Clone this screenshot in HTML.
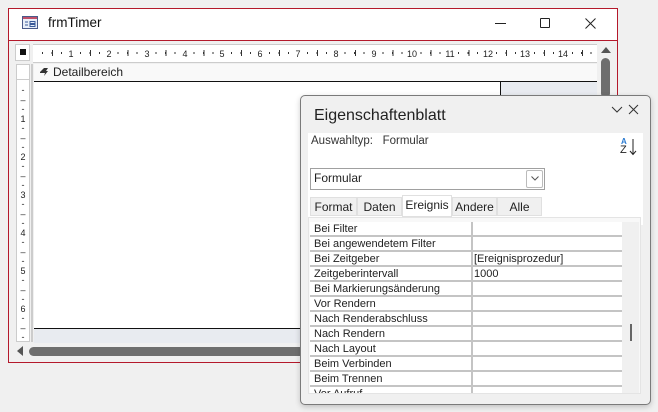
<!DOCTYPE html>
<html><head><meta charset="utf-8"><style>
*{margin:0;padding:0;box-sizing:border-box}
body{width:658px;height:412px;background:#f0f0f0;position:relative;overflow:hidden;font-family:"Segoe UI","Liberation Sans",sans-serif;font-size:11px;color:#222}
.a{position:absolute}
.row{position:absolute;left:310px;width:312px;height:15px;border-bottom:2px solid #c4c4c4}
.row span{position:absolute;left:4px;top:0;line-height:14px;font-size:11px}
.row i{position:absolute;left:164px;top:0;font-style:normal;line-height:14px;font-size:11px}
.row:before{content:"";position:absolute;left:161px;top:0;width:2px;height:15px;background:#c4c4c4}
.tab{position:absolute;top:197px;height:19px;background:#f0f0f0;border:1px solid #e0e0e0;font-size:12px;text-align:center;line-height:19px}
.n{position:absolute;top:4px;font-size:9px;line-height:10px;width:14px;margin-left:-7px;text-align:center;background:#fff}
</style></head><body>
<div class="a" style="left:8px;top:8px;width:610px;height:355px;border:1px solid #b4192b;background:#f0f0f0"></div>
<div class="a" style="left:9px;top:9px;width:608px;height:31px;background:#fff"></div>
<div class="a" style="left:9px;top:40px;width:608px;height:1px;background:#b4192b"></div>
<svg class="a" style="left:22px;top:16px" width="16" height="13"><rect x="0.5" y="0.5" width="15" height="12" fill="#e8eef8" stroke="#4a5a8a"/><rect x="1" y="1" width="14" height="2" fill="#c0506a"/><path d="M3 6h3M3 9h3M8 5.5h5v2h-5zM8 8.5h5v2h-5z" stroke="#3a5a9a" fill="none"/></svg>
<div class="a" style="left:48px;top:15px;font-size:13.5px;color:#111">frmTimer</div>
<div class="a" style="left:495px;top:23px;width:11px;height:1px;background:#222"></div>
<div class="a" style="left:540px;top:18px;width:10px;height:10px;border:1px solid #222;border-radius:1px"></div>
<svg class="a" style="left:585px;top:18px" width="11" height="11"><path d="M0.5 0.5L10.5 10.5M10.5 0.5L0.5 10.5" stroke="#222"/></svg>
<div class="a" style="left:15px;top:44px;width:15px;height:17px;background:#fff;border:1px solid #ccc"></div>
<div class="a" style="left:20px;top:49px;width:6px;height:6px;background:#111"></div>
<!-- horizontal ruler -->
<div class="a" style="left:33px;top:44px;width:564px;height:19px;background-color:#fff;border-top:1px solid #ccc;border-bottom:1px solid #ccc;overflow:hidden">
<div class="a" style="left:9px;top:7px;width:560px;height:2px;background:repeating-linear-gradient(90deg,#333 0 1px,transparent 1px 9.46px)"></div>
<div class="a" style="left:19px;top:5px;width:560px;height:6px;background:repeating-linear-gradient(90deg,#333 0 1px,transparent 1px 37.85px)"></div>
<div class="n" style="left:38px">1</div><div class="n" style="left:76px">2</div><div class="n" style="left:114px">3</div><div class="n" style="left:152px">4</div><div class="n" style="left:189px">5</div><div class="n" style="left:227px">6</div><div class="n" style="left:265px">7</div><div class="n" style="left:303px">8</div><div class="n" style="left:341px">9</div><div class="n" style="left:379px">10</div><div class="n" style="left:417px">11</div><div class="n" style="left:455px">12</div><div class="n" style="left:492px">13</div><div class="n" style="left:530px">14</div>
</div>
<div class="a" style="left:16px;top:64px;width:14px;height:278px;background:#fff;border:1px solid #ccc"></div>
<div class="a" style="left:16px;top:64px;width:14px;height:16px;border-bottom:1px solid #ccc"></div>
<div class="a" style="left:17px;top:86px;width:12px;font-size:9px;line-height:9.5px;text-align:center">-<br>–<br>-<br>1<br>-<br>–<br>-<br>2<br>-<br>–<br>-<br>3<br>-<br>–<br>-<br>4<br>-<br>–<br>-<br>5<br>-<br>–<br>-<br>6<br>-<br>–<br>-</div>
<div class="a" style="left:31px;top:64px;width:2px;height:278px;background:#ccc"></div>
<div class="a" style="left:34px;top:64px;width:563px;height:17px;background:#f9f9f9"></div>
<svg class="a" style="left:39px;top:68px" width="10" height="9"><path d="M1 4L5 0H9L7 3H9L5 8L6 5H1z" fill="#333"/></svg>
<div class="a" style="left:53px;top:65px;font-size:12px;color:#222">Detailbereich</div>
<div class="a" style="left:34px;top:81px;width:563px;height:1px;background:#111"></div>
<div class="a" style="left:34px;top:82px;width:466px;height:246px;background:#fff"></div>
<div class="a" style="left:500px;top:82px;width:1px;height:246px;background:#111"></div>
<div class="a" style="left:501px;top:82px;width:96px;height:261px;background:#e8ebf0"></div>
<div class="a" style="left:34px;top:328px;width:466px;height:1px;background:#111"></div>
<div class="a" style="left:34px;top:329px;width:466px;height:14px;background:#e8ebf0"></div>
<div class="a" style="left:12px;top:343px;width:590px;height:16px;background:#f0f0f0"></div>
<svg class="a" style="left:16px;top:346px" width="8" height="10"><path d="M7 0V10L1 5z" fill="#555"/></svg>
<div class="a" style="left:29px;top:347px;width:280px;height:9px;background:#6e6e6e;border-radius:5px"></div>
<svg class="a" style="left:601px;top:46px" width="10" height="8"><path d="M0 7H10L5 1z" fill="#555"/></svg>
<div class="a" style="left:601px;top:58px;width:9px;height:40px;background:#6e6e6e;border-radius:5px"></div>
<!-- property sheet -->
<div class="a" style="left:300px;top:95px;width:351px;height:310px;background:#f0f0f0;border:1px solid #7a7a7a;border-radius:5px;box-shadow:0 2px 6px rgba(0,0,0,.2)"></div>
<div class="a" style="left:314px;top:107px;font-size:16px;color:#222">Eigenschaftenblatt</div>
<svg class="a" style="left:611px;top:104px" width="30" height="12"><path d="M1 3L6 8L11 3M18 1L27 10M27 1L18 10" stroke="#333" fill="none"/></svg>
<div class="a" style="left:308px;top:133px;width:335px;height:92px;background:#fff"></div>
<div class="a" style="left:311px;top:135px;font-size:11.5px;color:#333">Auswahltyp:&nbsp;&nbsp; Formular</div>
<div class="a" style="left:621px;top:138px;font-size:8px;font-weight:bold;color:#2a7ad0;line-height:8px">A</div>
<div class="a" style="left:620px;top:145px;font-size:11px;color:#222;line-height:11px">Z</div>
<svg class="a" style="left:629px;top:139px" width="8" height="17"><path d="M4 0V15M1 12L4 15.5L7 12" stroke="#222" fill="none"/></svg>
<div class="a" style="left:310px;top:168px;width:235px;height:22px;border:1px solid #a0a0a0;background:#fff"></div>
<div class="a" style="left:314px;top:171px;font-size:12px;line-height:14px">Formular</div>
<div class="a" style="left:526px;top:170px;width:17px;height:18px;border:1px solid #bbb;border-radius:2px"></div>
<svg class="a" style="left:531px;top:176px" width="8" height="5"><path d="M0.5 0.5L4 4L7.5 0.5" stroke="#555" fill="none"/></svg>
<div class="tab" style="left:310px;width:47px">Format</div>
<div class="tab" style="left:357px;width:45px">Daten</div>
<div class="tab" style="left:452px;width:45px">Andere</div>
<div class="tab" style="left:497px;width:45px">Alle</div>
<div class="tab" style="left:402px;top:195px;width:50px;height:22px;background:#fff;line-height:18px">Ereignis</div>
<div class="a" style="left:308px;top:217px;width:333px;height:177px;background:#f8f8f8;border:1px solid #e4e4e4"></div>
<div class="a" style="left:310px;top:222px;width:312px;height:171px;background:#fff"></div>
<div class="a" style="left:622px;top:222px;width:17px;height:171px;background:#f0f0f0"></div>
<div class="a" style="left:630px;top:324px;width:2px;height:17px;background:#666"></div>
<div class="row" style="top:222px"><span>Bei Filter</span></div>
<div class="row" style="top:237px"><span>Bei angewendetem Filter</span></div>
<div class="row" style="top:252px"><span>Bei Zeitgeber</span><i>[Ereignisprozedur]</i></div>
<div class="row" style="top:267px"><span>Zeitgeberintervall</span><i>1000</i></div>
<div class="row" style="top:282px"><span>Bei Markierungsänderung</span></div>
<div class="row" style="top:297px"><span>Vor Rendern</span></div>
<div class="row" style="top:312px"><span>Nach Renderabschluss</span></div>
<div class="row" style="top:327px"><span>Nach Rendern</span></div>
<div class="row" style="top:342px"><span>Nach Layout</span></div>
<div class="row" style="top:357px"><span>Beim Verbinden</span></div>
<div class="row" style="top:372px"><span>Beim Trennen</span></div>
<div class="a" style="left:310px;top:387px;width:312px;height:6px;overflow:hidden;background:#fff"><div class="row" style="left:0;top:0"><span>Vor Aufruf</span></div></div>
</body></html>
